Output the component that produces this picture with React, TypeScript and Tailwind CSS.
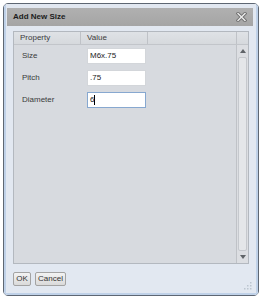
import React from 'react';

interface Prop {
  label: string;
  value: string;
  focused?: boolean;
}

const rows: Prop[] = [
  { label: 'Size', value: 'M6x.75' },
  { label: 'Pitch', value: '.75' },
  { label: 'Diameter', value: '6', focused: true },
];

const Arrow: React.FC<{ down?: boolean }> = ({ down }) => (
  <svg width="6" height="4" viewBox="0 0 6 4">
    {down ? <path d="M0 0 H6 L3 4 Z" fill="#5f6368" /> : <path d="M0 4 H6 L3 0 Z" fill="#5f6368" />}
  </svg>
);

const CloseIcon = () => (
  <svg width="11" height="10" viewBox="0 0 11 10">
    <path d="M2 1.5 L9 8.5 M9 1.5 L2 8.5" stroke="#6f6f6f" strokeWidth="3.2" strokeLinecap="square" />
    <path d="M2 1.5 L9 8.5 M9 1.5 L2 8.5" stroke="#ececec" strokeWidth="1.4" strokeLinecap="square" />
  </svg>
);

const Grip = () => (
  <svg width="8" height="8" viewBox="0 0 8 8">
    <rect x="6" y="0" width="1.5" height="1.5" fill="#bcc5d0" />
    <rect x="6" y="3" width="1.5" height="1.5" fill="#bcc5d0" />
    <rect x="3" y="3" width="1.5" height="1.5" fill="#bcc5d0" />
    <rect x="6" y="6" width="1.5" height="1.5" fill="#bcc5d0" />
    <rect x="3" y="6" width="1.5" height="1.5" fill="#bcc5d0" />
    <rect x="0" y="6" width="1.5" height="1.5" fill="#bcc5d0" />
  </svg>
);

const App: React.FC = () => {
  return (
    <div className="w-[264px] h-[300px] bg-white pt-[3px] pl-[3px] pr-[5px] pb-[4px] font-['Liberation_Sans',Arial,sans-serif] text-[8px] leading-none">
      <div className="h-full rounded-[5px] border border-[#5e6773] flex flex-col overflow-hidden">
        <div className="flex-1 flex flex-col border-x-2 border-b-2 border-[#bfd1e8] bg-[#e2e8f1] px-[1px] pt-[4px]">
          {/* title bar */}
          <div className="h-[18px] mr-[2px] flex items-center justify-between bg-gradient-to-b from-[#b0b0b0] to-[#a5a5a5] pl-[6px] pr-[6px]">
            <span className="font-bold text-[#1c1c1c]">Add New Size</span>
            <CloseIcon />
          </div>

          <div className="flex-1 flex flex-col pt-[5px] px-[6px] pb-[7px]">
            {/* property grid */}
            <div className="flex-1 flex flex-col border border-[#b3b8bf] bg-[#d7dadf]">
              <div className="h-[13px] flex border-b border-[#c2c5ca] bg-gradient-to-b from-[#dfe2e6] to-[#d6d9dd] text-[#3c3c3c]">
                <div className="w-[67px] border-r border-[#bfc2c7] pl-[6px] flex items-center">Property</div>
                <div className="w-[67px] border-r border-[#bfc2c7] pl-[6px] flex items-center">Value</div>
                <div className="flex-1 border-r border-[#bfc2c7]" />
                <div className="w-[11px]" />
              </div>
              <div className="flex-1 flex">
                <div className="flex-1 flex flex-col">
                  {rows.map(r => (
                    <div key={r.label} className="h-[22px] flex items-center">
                      <div className="w-[67px] pl-[8px] text-[#3a3a3a]">{r.label}</div>
                      <div
                        className={
                          r.focused
                            ? 'ml-[6px] w-[59px] h-[16px] bg-white border border-[#87a8d0] pl-[2px] flex items-center text-[#222]'
                            : 'ml-[6px] w-[59px] h-[16px] bg-white border border-[#d3d6da] pl-[2px] flex items-center text-[#222]'
                        }
                      >
                        {r.value}
                        {r.focused && <span className="inline-block w-[1px] h-[10px] bg-black ml-[0px]" />}
                      </div>
                    </div>
                  ))}
                </div>
                {/* scrollbar */}
                <div className="w-[12px] border-l border-[#bfc2c7] bg-[#dcdee2] flex flex-col">
                  <div className="h-[12px] flex items-center justify-center">
                    <Arrow />
                  </div>
                  <div className="flex-1 mx-[1px] rounded-[2px] border border-[#c5c8cd] bg-[#e4e6e9]" />
                  <div className="h-[12px] flex items-center justify-center">
                    <Arrow down />
                  </div>
                </div>
              </div>
            </div>

            {/* footer */}
            <div className="mt-[8px] h-[14px] flex items-center gap-[4px]">
              <button className="w-[18px] h-[14px] rounded-[2px] border border-[#a3a3a3] bg-gradient-to-b from-[#f3f3f3] to-[#dadada] text-[#333] text-[8px] leading-none">
                OK
              </button>
              <button className="w-[31px] h-[14px] rounded-[2px] border border-[#a3a3a3] bg-gradient-to-b from-[#f3f3f3] to-[#dadada] text-[#333] text-[8px] leading-none">
                Cancel
              </button>
              <div className="ml-auto self-end mb-[-4px] mr-[-3px]">
                <Grip />
              </div>
            </div>
          </div>
        </div>
      </div>
    </div>
  );
};

export default App;
